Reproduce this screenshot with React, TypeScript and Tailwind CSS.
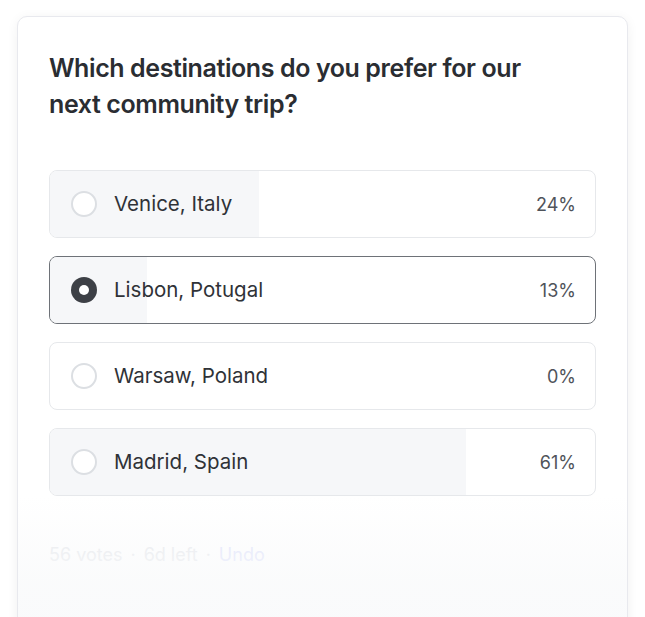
import React from 'react'

interface PollOption {
  label: string
  percent: number
  fill: number // fill width in px
  selected?: boolean
}

const options: PollOption[] = [
  { label: 'Venice, Italy', percent: 24, fill: 209 },
  { label: 'Lisbon, Potugal', percent: 13, fill: 97, selected: true },
  { label: 'Warsaw, Poland', percent: 0, fill: 0 },
  { label: 'Madrid, Spain', percent: 61, fill: 416 },
]

function Radio({ checked }: { checked?: boolean }) {
  if (checked) {
    return (
      <span className="flex h-[26px] w-[26px] shrink-0 items-center justify-center rounded-full bg-[#3d4046]">
        <span className="h-[10px] w-[10px] rounded-full bg-white" />
      </span>
    )
  }
  return <span className="h-[26px] w-[26px] shrink-0 rounded-full border-2 border-[#dcdfe3] bg-white" />
}

function OptionRow({ option }: { option: PollOption }) {
  return (
    <div
      className={`relative flex h-[68px] items-center overflow-hidden rounded-lg border bg-white pl-[21px] pr-[19px] ${
        option.selected ? 'border-[#6e7278]' : 'border-[#e6e8eb]'
      }`}
    >
      {/* result bar */}
      <div className="absolute inset-y-0 left-0 bg-[#f6f7f9]" style={{ width: option.fill }} />
      <div className="relative flex w-full items-center">
        <Radio checked={option.selected} />
        <span className="ml-[17px] text-[20.5px] text-[#2f3237]">{option.label}</span>
        <span className="ml-auto text-[18px] text-[#4f535a]">{option.percent}%</span>
      </div>
    </div>
  )
}

export default function App() {
  return (
    <div
      className="h-[617px] overflow-hidden bg-white px-[17px] pt-4"
      style={{ fontFamily: 'Inter, "Noto Sans", sans-serif' }}
    >
      <div className="relative h-[700px] rounded-[10px] border border-[#e8e9ee] bg-white px-[31px] pt-[33px] shadow-[0_2px_12px_rgba(0,0,0,0.06)]">
        <h2 className="text-[25px] font-semibold leading-[36px] tracking-[-0.016em] text-[#2a2d32]">
          Which destinations do you prefer for our
          <br />
          next community trip?
        </h2>

        <div className="mt-[48px] flex flex-col gap-[18px]">
          {options.map((o) => (
            <OptionRow key={o.label} option={o} />
          ))}
        </div>

        <div className="mt-[45px] flex items-center gap-2 text-[18px] text-[#e4e6ea]">
          <span>56 votes</span>
          <span>·</span>
          <span>6d left</span>
          <span>·</span>
          <span className="text-[#dcdffb]">Undo</span>
        </div>

        {/* fade-out overlay */}
        <div className="pointer-events-none absolute inset-x-0 top-[478px] bottom-0 rounded-b-[10px] bg-gradient-to-b from-white/0 via-[#f9fafb]/80 via-40% to-[#f8f9fb]" />
      </div>
    </div>
  )
}
